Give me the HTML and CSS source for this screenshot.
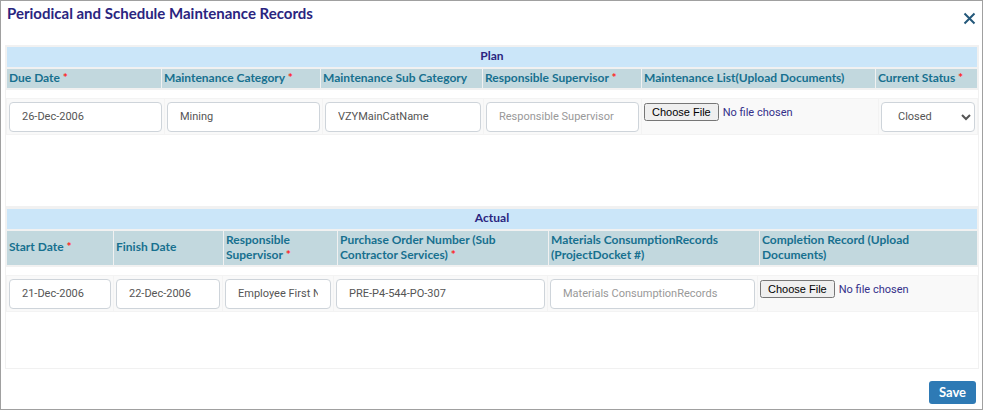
FILE: index.html
```html
<!DOCTYPE html>
<html lang="en">
<head>
<meta charset="utf-8">
<title>Periodical and Schedule Maintenance Records</title>
<link rel="stylesheet" href="styles.css">
</head>
<body>
<form class="dialog">
  <header class="dialog-header">
    <h1>Periodical and Schedule Maintenance Records</h1>
    <button type="button" class="close" aria-label="Close">
      <svg viewBox="0 0 13 13" width="13" height="13" aria-hidden="true"><path d="M1.5 1.5 11.5 11.5M11.5 1.5 1.5 11.5"/></svg>
    </button>
  </header>

  <section class="panel">
    <table class="heading">
      <colgroup><col class="w155"><col class="w159"><col class="w162"><col class="w159"><col class="w234"><col></colgroup>
      <thead>
        <tr class="band"><th colspan="6">Plan</th></tr>
        <tr class="labels">
          <th id="due">Due Date <i>*</i></th>
          <th id="category">Maintenance Category <i>*</i></th>
          <th id="subcategory">Maintenance Sub Category</th>
          <th id="planner">Responsible Supervisor <i>*</i></th>
          <th id="list">Maintenance List(Upload Documents)</th>
          <th id="status">Current Status <i>*</i></th>
        </tr>
      </thead>
    </table>
    <table class="fields">
      <colgroup><col class="w158"><col class="w158"><col class="w161"><col class="w158"><col class="w237"><col></colgroup>
      <tbody>
        <tr>
          <td><input type="text" aria-labelledby="due" value="26-Dec-2006"></td>
          <td><input type="text" aria-labelledby="category" value="Mining"></td>
          <td><input type="text" aria-labelledby="subcategory" value="VZYMainCatName"></td>
          <td><input type="text" aria-labelledby="planner" placeholder="Responsible Supervisor"></td>
          <td><input type="file" aria-labelledby="list"></td>
          <td><select aria-labelledby="status"><option>Closed</option><option>Open</option></select></td>
        </tr>
      </tbody>
    </table>
  </section>

  <section class="panel">
    <table class="heading">
      <colgroup><col class="w107"><col class="w110"><col class="w114"><col class="w211"><col class="w211"><col></colgroup>
      <thead>
        <tr class="band"><th colspan="6">Actual</th></tr>
        <tr class="labels">
          <th id="start">Start Date <i>*</i></th>
          <th id="finish">Finish Date</th>
          <th id="supervisor">Responsible Supervisor <i>*</i></th>
          <th id="order">Purchase Order Number (Sub Contractor Services) <i>*</i></th>
          <th id="materials">Materials ConsumptionRecords (ProjectDocket #)</th>
          <th id="completion">Completion Record (Upload Documents)</th>
        </tr>
      </thead>
    </table>
    <table class="fields">
      <colgroup><col class="w107"><col class="w109"><col class="w111"><col class="w214"><col class="w210"><col></colgroup>
      <tbody>
        <tr>
          <td><input type="text" aria-labelledby="start" value="21-Dec-2006"></td>
          <td><input type="text" aria-labelledby="finish" value="22-Dec-2006"></td>
          <td><input type="text" aria-labelledby="supervisor" value="Employee First Name"></td>
          <td><input type="text" aria-labelledby="order" value="PRE-P4-544-PO-307"></td>
          <td><input type="text" aria-labelledby="materials" placeholder="Materials ConsumptionRecords"></td>
          <td><input type="file" aria-labelledby="completion"></td>
        </tr>
      </tbody>
    </table>
  </section>

  <footer class="dialog-footer"><button type="submit" class="save">Save</button></footer>
</form>
</body>
</html>
```
FILE: styles.css
```css
* { box-sizing: border-box; }

body {
  margin: 0;
  font-family: Lato, "Liberation Sans", sans-serif;
  color: #2a2580;
}

.dialog {
  min-height: 100vh;
  padding: 0 3px 4px 4px;
  border: 1px solid #a0a0a0;
  background: #fff;
}

.dialog-header {
  display: flex;
  justify-content: space-between;
  height: 44px;
  padding: 4px 3px 0 2px;
}

h1 {
  margin: 0;
  font-size: 15px;
  line-height: 17px;
  font-weight: 700;
}

.close {
  align-self: flex-start;
  display: flex;
  margin-top: 7px;
  padding: 0;
  border: 0;
  background: none;
}

.close path {
  fill: none;
  stroke: #24587a;
  stroke-width: 2;
}

.panel {
  min-height: 162px;
  border: 1px solid #f1f1f1;
}

.heading,
.fields {
  width: 100%;
  table-layout: fixed;
}

.heading {
  border-collapse: collapse;
  border: solid #f1f1f1;
  border-width: 1px 1px 2px;
  background: #c2d8de;
}

.heading th {
  padding: 1px 2px 3px;
  font-size: 12px;
  line-height: 15px;
  font-weight: 700;
}

.heading .band th {
  height: 21px;
  border-bottom: 2px solid #f1f1f1;
  background: #cbe6f9;
  text-align: center;
}

.labels th {
  border-left: 1px solid #f1f1f1;
  color: #17708f;
  text-align: left;
}

.labels i {
  color: #f22;
  font-style: normal;
}

.fields {
  margin-top: 8px;
  border-collapse: collapse;
  background: #f9f9f9;
}

.fields td {
  height: 36px;
  padding: 3px 2px 2px;
  border: 1px solid #f3f3f3;
  vertical-align: top;
}

.fields input,
.fields select {
  display: block;
  width: 100%;
  margin: 0;
  font-family: Roboto, sans-serif;
  font-size: 11px;
}

.fields input[type="text"],
.fields select {
  height: 30px;
  padding: 0 12px;
  border: 1px solid #ced4da;
  border-radius: 4px;
  background: #fff;
  color: #555;
}

.fields input::placeholder { color: #999; }

.fields input[type="file"] {
  margin-top: 1px;
  color: #34308a;
}

.fields select { padding: 0 0 0 12px; }

.dialog-footer {
  display: flex;
  justify-content: flex-end;
  padding: 12px 3px 0 0;
}

.save {
  width: 47px;
  height: 23px;
  padding: 0;
  border: 0;
  border-radius: 3px;
  background: #2e7ab5;
  color: #fff;
  font: 700 13px/15px Lato, sans-serif;
}

.w107 { width: 107px; }
.w109 { width: 109px; }
.w110 { width: 110px; }
.w111 { width: 111px; }
.w114 { width: 114px; }
.w155 { width: 155px; }
.w158 { width: 158px; }
.w159 { width: 159px; }
.w161 { width: 161px; }
.w162 { width: 162px; }
.w210 { width: 210px; }
.w211 { width: 211px; }
.w214 { width: 214px; }
.w234 { width: 234px; }
.w237 { width: 237px; }
```
